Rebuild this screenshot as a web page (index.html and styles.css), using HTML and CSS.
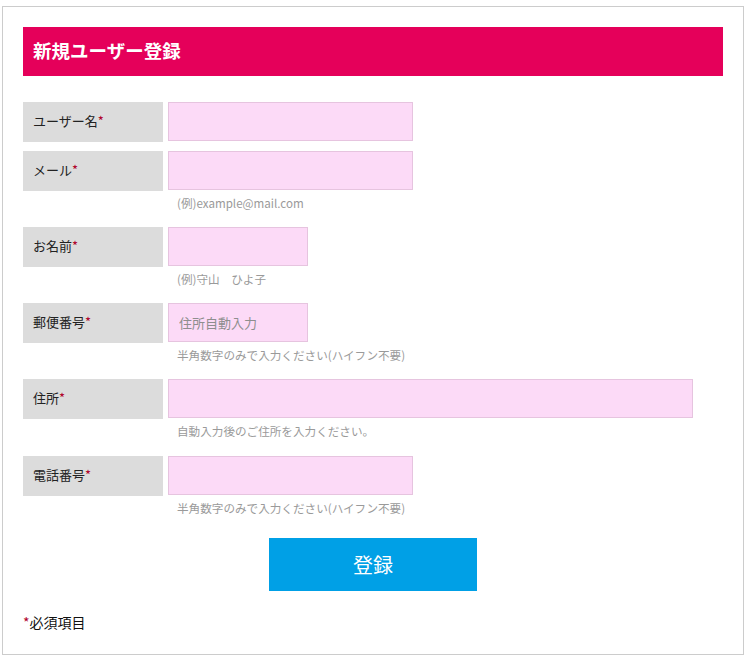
FILE: index.html
```html
<!DOCTYPE html>
<html lang="ja">
<head>
<meta charset="utf-8">
<title>新規ユーザー登録</title>
<link rel="stylesheet" href="styles.css">
</head>
<body>
<div class="box">
  <h1 class="title">新規ユーザー登録</h1>
  <form class="form">
    <div class="field">
      <div class="row">
        <div class="label">ユーザー名<span class="req">*</span></div>
        <input class="input w245" type="text">
      </div>
    </div>
    <div class="field">
      <div class="row">
        <div class="label">メール<span class="req">*</span></div>
        <input class="input w245" type="text">
      </div>
      <div class="help">(例)example@mail.com</div>
    </div>
    <div class="field">
      <div class="row">
        <div class="label">お名前<span class="req">*</span></div>
        <input class="input w140" type="text">
      </div>
      <div class="help">(例)守山　ひよ子</div>
    </div>
    <div class="field">
      <div class="row">
        <div class="label">郵便番号<span class="req">*</span></div>
        <input class="input w140" type="text" placeholder="住所自動入力">
      </div>
      <div class="help">半角数字のみで入力ください(ハイフン不要)</div>
    </div>
    <div class="field address">
      <div class="row">
        <div class="label">住所<span class="req">*</span></div>
        <input class="input w525" type="text">
      </div>
      <div class="help">自動入力後のご住所を入力ください。</div>
    </div>
    <div class="field last">
      <div class="row">
        <div class="label">電話番号<span class="req">*</span></div>
        <input class="input w245" type="text">
      </div>
      <div class="help">半角数字のみで入力ください(ハイフン不要)</div>
    </div>
    <div class="actions">
      <button class="submit" type="button">登録</button>
    </div>
  </form>
  <p class="note"><span class="req">*</span>必須項目</p>
</div>
</body>
</html>
```

FILE: styles.css
```css
html, body {
  margin: 0;
  padding: 0;
  background: #fff;
}
body {
  font-family: "Noto Sans CJK JP", "Noto Sans", sans-serif;
  color: #222;
}
.box {
  box-sizing: border-box;
  width: 742px;
  height: 649px;
  margin: 6px 0 0 2px;
  border: 1px solid #cccccc;
  padding: 20px 20px 0 20px;
}
.title {
  margin: 0;
  height: 49px;
  background: #e5005a;
  color: #fff;
  font-size: 18.5px;
  font-weight: bold;
  line-height: 47px;
  padding-left: 10px;
}
.form {
  margin-top: 26px;
}
.field {
  margin-bottom: 9px;
}
.field.address {
  margin-bottom: 10px;
}
.row {
  display: flex;
  align-items: flex-start;
  gap: 5px;
}
.label {
  box-sizing: border-box;
  width: 140px;
  height: 40px;
  background: #dcdcdc;
  font-size: 13px;
  line-height: 38px;
  padding-left: 10px;
  color: #222;
}
.req {
  color: #b0002a;
}
.input {
  box-sizing: border-box;
  height: 39px;
  margin: 0;
  border: 1px solid #e6c4df;
  background: #fcdaf7;
  padding: 0 10px;
  font-family: inherit;
  font-size: 13px;
  outline: none;
}
.input::placeholder {
  color: #8e8e8e;
}
.w245 { width: 245px; }
.w140 { width: 140px; }
.w525 { width: 525px; }
.help {
  font-size: 11.6px;
  line-height: 18px;
  color: #9a9a9a;
  padding: 3px 0 6px 154px;
}
.field.last {
  margin-bottom: 15px;
}
.actions {
  display: flex;
  justify-content: center;
}
.submit {
  width: 208px;
  height: 53px;
  border: none;
  background: #00a0e6;
  color: #fff;
  font-family: inherit;
  font-size: 20px;
  padding: 0;
  cursor: pointer;
}
.note {
  margin: 21px 0 0 0;
  font-size: 14px;
  line-height: 20px;
  color: #111;
}
```
